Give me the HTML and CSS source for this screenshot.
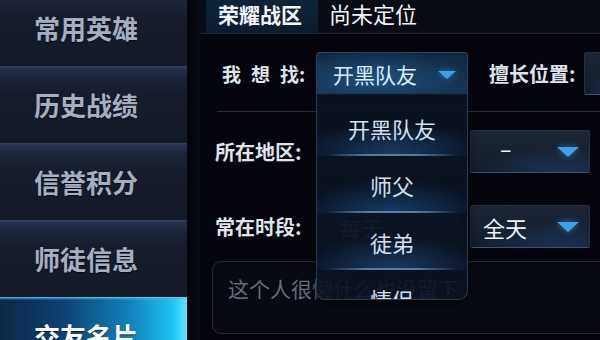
FILE: index.html
```html
<!DOCTYPE html>
<html lang="zh-CN">
<head>
<meta charset="utf-8">
<title>交友名片</title>
<link rel="stylesheet" href="styles.css">
</head>
<body>
<div class="app">
  <nav class="side">
    <div class="nav-item">常用英雄</div>
    <div class="nav-item">历史战绩</div>
    <div class="nav-item">信誉积分</div>
    <div class="nav-item">师徒信息</div>
    <div class="nav-item active">交友名片</div>
  </nav>
  <div class="gutter"></div>
  <main class="content">
    <div class="topbar">
      <div class="tab">荣耀战区</div>
      <div class="status">尚未定位</div>
    </div>

    <div class="row row-first">
      <div class="label label-spaced"><span>我</span><span>想</span><span>找:</span></div>
      <div class="select select-open">
        <span class="select-text">开黑队友</span>
        <span class="arrow arrow-sm"></span>
        <ul class="dropdown">
          <li class="option">开黑队友</li>
          <li class="option">师父</li>
          <li class="option">徒弟</li>
          <li class="option">情侣</li>
        </ul>
      </div>
      <div class="label label-pos">擅长位置:</div>
      <div class="select select-small select-cut"></div>
    </div>

    <div class="divider"></div>

    <div class="row row-region">
      <div class="label">所在地区:</div>
      <div class="select select-ghost"></div>
      <div class="select select-small">
        <span class="select-text dash">–</span>
        <span class="arrow"></span>
      </div>
    </div>

    <div class="row row-time">
      <div class="label">常在时段:</div>
      <div class="select select-ghost"><span class="select-text ghost-text">每天</span></div>
      <div class="select select-small">
        <span class="select-text">全天</span>
        <span class="arrow"></span>
      </div>
    </div>

    <div class="textarea">这个人很懒什么也没留下</div>
  </main>
</div>
</body>
</html>
```

FILE: styles.css
```css
* { box-sizing: border-box; margin: 0; padding: 0; }

html, body {
  width: 600px;
  height: 340px;
  overflow: hidden;
  background: #04050c;
  font-family: "Noto Sans CJK SC", "Noto Sans", sans-serif;
}

.app {
  display: flex;
  width: 600px;
  height: 340px;
  overflow: hidden;
}

/* ---------- sidebar ---------- */
.side {
  width: 187px;
  flex: none;
  margin-top: -11px;
  display: flex;
  flex-direction: column;
}

.nav-item {
  height: 77px;
  flex: none;
  display: flex;
  align-items: center;
  padding-left: 34px;
  font-size: 26px;
  font-weight: 700;
  color: #a6afc2;
  text-shadow: 0 1px 1px rgba(0, 0, 0, 0.6);
  background: linear-gradient(#34456a 0px, #27324e 2px, #1c2438 12px, #161c2b 28px, #141a27 60px);
}

.nav-item.active {
  color: #ffffff;
  background:
    linear-gradient(#4fc6ee 0px, rgba(79, 198, 238, 0) 3px),
    linear-gradient(90deg, #0b2747 0%, #0d4374 35%, #1283bd 70%, #1dc2f0 92%, #5fe4ff 100%);
}

.gutter {
  width: 13px;
  flex: none;
  background: linear-gradient(90deg, #03040a, #070a15);
}

/* ---------- content ---------- */
.content {
  width: 400px;
  flex: none;
  display: flex;
  flex-direction: column;
  background: #04050c;
}

.topbar {
  height: 34px;
  flex: none;
  display: flex;
  align-items: flex-start;
  background: #090b15;
  border-bottom: 1px solid #17263a;
}

.tab {
  margin-left: 6px;
  width: 112px;
  height: 33px;
  padding-left: 12px;
  line-height: 28px;
  font-size: 21px;
  font-weight: 700;
  color: #f4f6f8;
  background: linear-gradient(#0f2438, #0c1c2e);
}

.status {
  margin-left: 11px;
  line-height: 26px;
  font-size: 22px;
  color: #f1f2f4;
}

.row {
  display: flex;
  align-items: center;
  padding-left: 15px;
  height: 43px;
  flex: none;
}

.row-first { margin-top: 18px; }
.row-region { margin-top: 18px; }
.row-time { margin-top: 32px; }

.label {
  width: 101px;
  flex: none;
  font-size: 20px;
  font-weight: 700;
  color: #dfe3ea;
  white-space: nowrap;
}

.label-spaced {
  display: flex;
  gap: 10px;
  padding-left: 7px;
  font-size: 19px;
}

.label-pos {
  width: auto;
  margin-left: 21px;
  margin-right: 8px;
}

.divider {
  margin: 16px 0 0 17px;
  height: 1px;
  flex: none;
  background: #262c3a;
}

/* ---------- selects ---------- */
.select {
  position: relative;
  height: 43px;
  flex: none;
  display: flex;
  align-items: center;
}

.select-text {
  font-size: 22px;
  color: #eef2f6;
}

.select-open {
  width: 152px;
  padding: 0 11px 0 16px;
  justify-content: space-between;
  border: 1px solid #2b4562;
  border-radius: 3px 3px 0 0;
  background:
    radial-gradient(ellipse 60% 70% at 40% 60%, rgba(36, 104, 170, 0.55), rgba(36, 104, 170, 0) 100%),
    linear-gradient(#13273f, #173757);
}

.select-open .select-text { color: #d9eefa; font-size: 21px; }

.select-small {
  width: 120px;
  margin-left: 10px;
  padding: 0 10px 0 12px;
  justify-content: space-between;
  border: 1px solid #262f42;
  border-bottom-color: #34557a;
  border-radius: 2px;
  background:
    radial-gradient(ellipse 70% 60% at 75% 100%, rgba(30, 80, 130, 0.45), rgba(30, 80, 130, 0) 100%),
    linear-gradient(#1c2535, #141c2b);
}

.select-cut {
  width: 40px;
  margin-left: 0;
}

.select-ghost {
  width: 144px;
  padding-left: 22px;
  border: 1px solid #1d2535;
  background: linear-gradient(#161d2b, #111724);
}

.ghost-text { color: #5d6472; }

.dash {
  padding-left: 17px;
  margin-bottom: 4px;
  font-family: "DejaVu Sans", sans-serif;
  font-size: 23px;
}

.arrow {
  width: 0;
  height: 0;
  border-left: 11px solid transparent;
  border-right: 11px solid transparent;
  border-top: 10px solid #3aa3e8;
  filter: drop-shadow(0 0 3px rgba(60, 160, 240, 0.6));
}

.arrow-sm {
  border-left-width: 9px;
  border-right-width: 9px;
  border-top-width: 8px;
  margin-top: 2px;
}

/* ---------- dropdown (overlay) ---------- */
.dropdown {
  position: absolute;
  top: 100%;
  left: -1px;
  width: 152px;
  height: 206px;
  padding-top: 5px;
  list-style: none;
  overflow: hidden;
  border: 1px solid #2b3a52;
  border-top: none;
  border-radius: 0 0 9px 9px;
  background: rgba(11, 19, 33, 0.9);
  box-shadow: 0 4px 10px rgba(0, 0, 0, 0.6);
  z-index: 5;
}

.option {
  position: relative;
  height: 57px;
  display: flex;
  align-items: center;
  justify-content: center;
  font-size: 22px;
  color: #d4e0ec;
  background: radial-gradient(ellipse 60% 55% at 50% 95%, rgba(34, 96, 160, 0.5), rgba(34, 96, 160, 0) 100%);
}

.option::after {
  content: "";
  position: absolute;
  left: 10px;
  right: 10px;
  bottom: 0;
  height: 2px;
  background: linear-gradient(90deg, rgba(70, 110, 150, 0), rgba(110, 150, 190, 0.75) 30%, rgba(110, 150, 190, 0.75) 70%, rgba(70, 110, 150, 0));
}

/* ---------- textarea ---------- */
.textarea {
  margin: 13px 0 0 12px;
  width: 420px;
  height: 73px;
  flex: none;
  padding: 12px 0 0 15px;
  font-size: 21px;
  line-height: 28px;
  color: #666d7b;
  border: 1px solid #252a36;
  border-radius: 9px;
  background: #080a12;
}
```
